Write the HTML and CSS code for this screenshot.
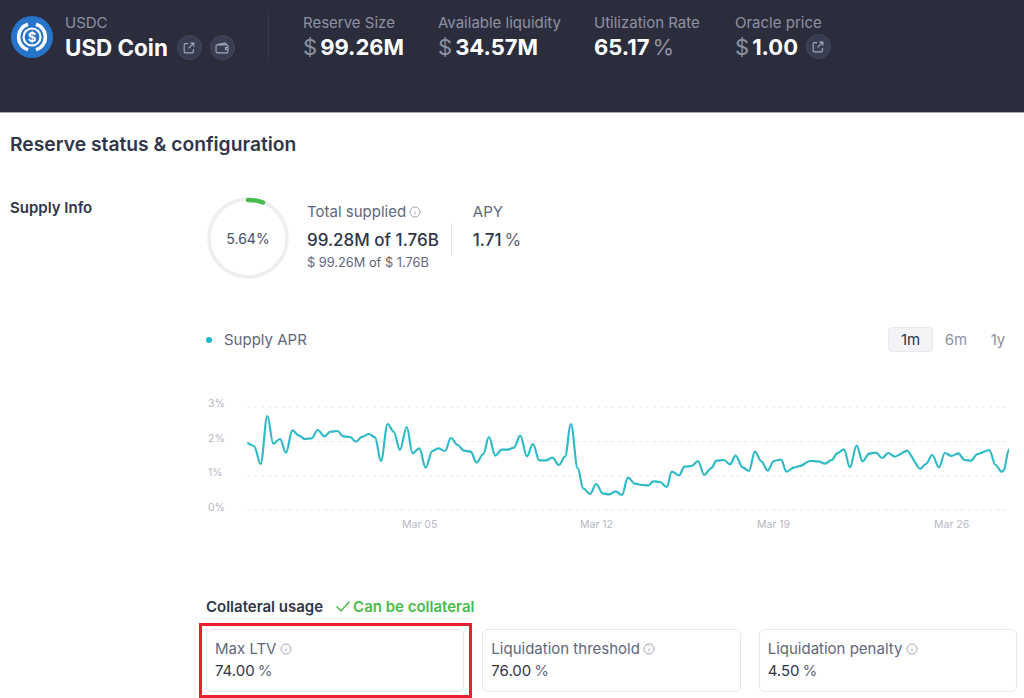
FILE: index.html
```html
<!DOCTYPE html>
<html lang="en">
<head>
    <title>USDC Reserve</title>
    <meta charset="utf-8">
    <meta name="viewport" content="width=device-width, initial-scale=1">
    <link rel="stylesheet" href="styles.css">
</head>
<body>
    <header class="topbar">
        <div class="asset">
            <svg class="logo" viewBox="0 0 42 42">
                <circle cx="21" cy="21" r="21" fill="#2775ca"/>
                <path d="M17 8.200a13.400 13.400 0 0 0 0 25.600M25 8.200a13.400 13.400 0 0 1 0 25.600" fill="none" stroke="#fff" stroke-width="3.600"/>
                <circle cx="21" cy="21" r="9.600" fill="#fff"/>
                <circle cx="21" cy="21" r="7.400" fill="#2775ca"/>
                <text x="21" y="25.600" text-anchor="middle" class="logo-sign">$</text>
            </svg>
            <div>
                <div class="stat-label">USDC</div>
                <div class="asset-name">
                    <span>USD Coin</span>
                    <a class="round-btn" href="#">
                        <svg viewBox="0 0 16 16"><path d="M7 3H4a1.500 1.500 0 0 0-1.500 1.500V12A1.500 1.500 0 0 0 4 13.500h7.500A1.500 1.500 0 0 0 13 12V9M9.500 2.500h4v4M13.500 2.500 7.500 8.500"/></svg>
                    </a>
                    <a class="round-btn" href="#">
                        <svg viewBox="0 0 16 16"><path d="M2.500 4 11.500 2.500c.8-.1 1.300.4 1.300 1.200v.8M2.700 4.500h10.600c.9 0 1.500.6 1.500 1.500v6c0 .9-.6 1.500-1.500 1.500H2.700c-.9 0-1.500-.6-1.500-1.500V6c0-.9.600-1.500 1.500-1.500ZM14.800 7.500h-2.800v2.500h2.800"/></svg>
                    </a>
                </div>
            </div>
        </div>
        <div class="stats">
            <div class="stat stat-size">
                <div class="stat-label">Reserve Size</div>
                <div class="stat-value"><i>$</i>99.26M</div>
            </div>
            <div class="stat stat-liquidity">
                <div class="stat-label">Available liquidity</div>
                <div class="stat-value"><i>$</i>34.57M</div>
            </div>
            <div class="stat stat-rate">
                <div class="stat-label">Utilization Rate</div>
                <div class="stat-value">65.17<i class="after">%</i></div>
            </div>
            <div class="stat">
                <div class="stat-label">Oracle price</div>
                <div class="stat-value">
                    <i>$</i>1.00
                    <a class="round-btn oracle-btn" href="#">
                        <svg viewBox="0 0 16 16"><path d="M7 3H4a1.500 1.500 0 0 0-1.500 1.500V12A1.500 1.500 0 0 0 4 13.500h7.500A1.500 1.500 0 0 0 13 12V9M9.500 2.500h4v4M13.500 2.500 7.500 8.500"/></svg>
                    </a>
                </div>
            </div>
        </div>
    </header>

    <main class="panel">
        <h1>Reserve status &amp; configuration</h1>

        <section class="supply">
            <h2>Supply Info</h2>
            <div class="supply-body">
                <div class="overview">
                    <div class="gauge">
                        <svg viewBox="0 0 82 82">
                            <circle cx="41" cy="41" r="39" fill="none" stroke="#eeeeee" stroke-width="3.500"/>
                            <path d="M41 3C47 3 52 3.800 56 5.500" fill="none" stroke="#46bc4b" stroke-width="4.500" stroke-linecap="round"/>
                        </svg>
                        <span>5.64%</span>
                    </div>
                    <div class="totals">
                        <div class="muted">Total supplied
                            <svg class="info" viewBox="0 0 12 12"><circle cx="6" cy="6" r="5"/><path d="M6 5.500v3M6 3.300v.6"/></svg>
                        </div>
                        <div class="strong">99.28M of 1.76B</div>
                        <div class="small">$ 99.26M of $ 1.76B</div>
                    </div>
                    <div class="apy">
                        <div class="muted">APY</div>
                        <div class="strong">1.71<i>%</i></div>
                    </div>
                </div>

                <div class="chart-head">
                    <div class="legend"><span class="dot"></span>Supply APR</div>
                    <div class="tabs">
                        <span class="tab active">1m</span>
                        <span class="tab">6m</span>
                        <span class="tab last">1y</span>
                    </div>
                </div>

                <svg class="chart" viewBox="16 0 818 152">
                    <g class="grid">
                        <line x1="57" x2="818" y1="22" y2="22"/>
                        <line x1="57" x2="818" y1="56.500" y2="56.500"/>
                        <line x1="57" x2="818" y1="91" y2="91"/>
                        <line x1="57" x2="818" y1="125" y2="125"/>
                    </g>
                    <g class="axis">
                        <text x="18" y="19">3%</text>
                        <text x="18" y="54">2%</text>
                        <text x="18" y="88">1%</text>
                        <text x="18" y="123">0%</text>
                        <text x="212" y="140">Mar 05</text>
                        <text x="390" y="140">Mar 12</text>
                        <text x="567" y="140">Mar 19</text>
                        <text x="744" y="140">Mar 26</text>
                    </g>
                    <path class="line" transform="scale(0.3333)" d="M172,175 C179,175 185,183 192,183 S205,237 212,237 S225,93 232,93 S243,176 250,176 S263,162 270,162 S281,203 288,203 S300,136 307,136 S320,152 327,152 S338,162 345,162 S358,160 365,160 S376,135 383,135 S396,154 403,154 S415,140 422,140 S435,138 442,138 S453,154 460,154 S473,156 480,156 S491,170 498,170 S510,155 517,155 S530,147 537,147 S548,157 555,157 S566,228 573,228 S586,117 593,117 S604,140 611,140 S623,195 630,195 S643,126 650,126 S661,205 668,205 S681,190 688,190 S700,248 707,248 S720,198 727,198 S738,190 745,190 S758,198 765,198 S776,159 783,159 S796,180 803,180 S815,197 822,197 S835,200 842,200 S853,233 860,233 S873,207 880,207 S890,156 897,156 S909,212 916,212 S928,194 935,194 S946,194 953,194 S965,188 972,188 S984,152 991,152 S1004,214 1011,214 S1022,177 1029,177 S1041,226 1048,226 S1061,226 1068,226 S1080,218 1087,218 S1100,240 1107,240 S1118,215 1125,215 S1136,117 1143,117 S1156,250 1163,250 S1173,310 1180,310 S1193,327 1200,327 S1212,297 1219,297 S1231,325 1238,325 S1251,328 1258,328 S1270,319 1277,319 S1289,330 1296,330 S1307,278 1314,278 S1328,296 1335,296 S1348,300 1355,300 S1368,301 1375,301 S1383,289 1390,289 S1403,291 1410,291 S1423,306 1430,306 S1439,260 1446,260 S1460,271 1467,271 S1477,245 1484,245 S1498,243 1505,243 S1517,228 1524,228 S1536,270 1543,270 S1556,250 1563,250 S1573,227 1580,227 S1595,225 1602,225 S1613,238 1620,238 S1630,212 1637,212 S1651,247 1658,247 S1670,258 1677,258 S1688,200 1695,200 S1708,230 1715,230 S1726,257 1733,257 S1745,228 1752,228 S1766,224 1773,224 S1783,260 1790,260 S1806,247 1813,247 S1823,243 1830,243 S1853,228 1860,228 S1878,229 1885,229 S1898,236 1905,236 S1918,225 1925,225 S1935,205 1942,205 S1955,193 1962,193 S1973,247 1980,247 S1993,182 2000,182 S2011,229 2018,229 S2031,206 2038,206 S2051,203 2058,203 S2070,219 2077,219 S2088,204 2095,204 S2108,215 2115,215 S2145,197 2152,197 S2183,252 2190,252 S2201,237 2208,237 S2220,210 2227,210 S2240,247 2247,247 S2258,204 2265,204 S2278,213 2285,213 S2298,205 2305,205 S2317,225 2324,225 S2336,227 2343,227 S2356,207 2363,207 S2391,195 2398,195 S2410,240 2417,240 S2428,260 2435,260 S2438,255 2442,255 S2452,193 2457,193"/>
                </svg>

                <div class="collateral">
                    <div class="collateral-head">
                        <b>Collateral usage</b>
                        <span class="ok">
                            <svg viewBox="0 0 16 16"><path d="M1.500 8.500 6 13 14.500 3.500"/></svg>
                            Can be collateral
                        </span>
                    </div>
                    <div class="cards">
                        <div class="card marked">
                            <div class="muted">Max LTV
                                <svg class="info" viewBox="0 0 12 12"><circle cx="6" cy="6" r="5"/><path d="M6 5.500v3M6 3.300v.6"/></svg>
                            </div>
                            <div class="card-value">74.00<i>%</i></div>
                        </div>
                        <div class="card">
                            <div class="muted">Liquidation threshold
                                <svg class="info" viewBox="0 0 12 12"><circle cx="6" cy="6" r="5"/><path d="M6 5.500v3M6 3.300v.6"/></svg>
                            </div>
                            <div class="card-value">76.00<i>%</i></div>
                        </div>
                        <div class="card">
                            <div class="muted">Liquidation penalty
                                <svg class="info" viewBox="0 0 12 12"><circle cx="6" cy="6" r="5"/><path d="M6 5.500v3M6 3.300v.6"/></svg>
                            </div>
                            <div class="card-value">4.50<i>%</i></div>
                        </div>
                    </div>
                </div>
            </div>
        </section>
    </main>
</body>
</html>
```

FILE: styles.css
```css
* {
    box-sizing: border-box;
    margin: 0;
    padding: 0;
    font-family: Inter, "Liberation Sans", sans-serif;
}

html, body {
    height: 698px;
    overflow: hidden;
}

body {
    background: #fff;
    color: #303549;
}

i {
    font-style: normal;
}

.topbar {
    display: flex;
    height: 113px;
    padding: 14px 0 0 11px;
    background: #2b2d3c;
    border-bottom: 1px solid #a9abb3;
}

.asset {
    display: flex;
    gap: 12px;
    width: 258px;
    height: 44px;
    border-right: 1px solid #383d51;
}

.logo {
    width: 42px;
    height: 42px;
    margin-top: 2px;
}

.logo-sign {
    font-size: 13px;
    font-weight: 700;
    fill: #fff;
}

.stat-label {
    font-size: 15px;
    line-height: 18px;
    color: #8e92a3;
}

.asset-name {
    display: flex;
    align-items: center;
    margin-top: 2px;
    font-size: 22.400px;
    font-weight: 700;
    color: #fff;
}

.round-btn {
    display: inline-flex;
    align-items: center;
    justify-content: center;
    width: 25px;
    height: 25px;
    margin-left: 8px;
    border-radius: 50%;
    background: #383d51;
    border: 1px solid #444859;
}

.asset-name .round-btn:first-of-type {
    margin-left: 9px;
}

.round-btn svg {
    width: 14px;
    height: 14px;
    fill: none;
    stroke: #a5a8b6;
    stroke-width: 1.300;
}

.stats {
    display: flex;
    padding-left: 34px;
}

.stat-size {
    width: 135px;
}

.stat-liquidity {
    width: 156px;
}

.stat-rate {
    width: 141px;
}

.stat-value {
    display: flex;
    align-items: center;
    height: 25px;
    margin-top: 2px;
    font-size: 22px;
    font-weight: 700;
    color: #fff;
}

.stat-value i {
    margin-right: 3px;
    font-weight: 400;
    color: #8e92a3;
}

.stat-value i.after {
    margin: 0 0 0 3px;
}

.oracle-btn {
    margin-left: 8px;
}

.panel {
    padding: 20px 0 0 10px;
}

h1 {
    font-size: 19.300px;
    line-height: 22px;
    font-weight: 600;
}

.supply {
    display: grid;
    grid-template-columns: 196px 1fr;
    margin-top: 44px;
}

h2 {
    font-size: 15px;
    line-height: 18px;
    font-weight: 600;
}

.overview {
    display: flex;
    margin-top: -2px;
}

.gauge {
    position: relative;
    width: 82px;
    height: 82px;
    margin-left: 1px;
}

.gauge svg {
    display: block;
    width: 82px;
    height: 82px;
}

.gauge span {
    position: absolute;
    inset: 0;
    display: flex;
    align-items: center;
    justify-content: center;
    font-size: 14px;
    color: #4a4f62;
}

.totals {
    margin: 6px 0 0 18px;
    padding-right: 12px;
}

.muted {
    font-size: 15px;
    line-height: 18px;
    color: #62677b;
}

.info {
    width: 12px;
    height: 12px;
    margin-left: -1px;
    vertical-align: -1px;
    fill: none;
    stroke: #a5a8b6;
    stroke-width: 1;
}

.strong {
    margin-top: 9px;
    font-size: 17px;
    line-height: 20px;
    font-weight: 500;
}

.strong i, .card-value i {
    margin-left: 3px;
    font-weight: 400;
    color: #62677b;
}

.small {
    margin-top: 5px;
    font-size: 12.800px;
    line-height: 16px;
    color: #62677b;
}

.apy {
    height: 33px;
    margin-top: 26px;
    padding-left: 21px;
    border-left: 1px solid #e4e5e9;
}

.apy .muted {
    margin-top: -20px;
}

.chart-head {
    display: flex;
    justify-content: space-between;
    align-items: center;
    height: 25px;
    margin-top: 48px;
    padding-right: 7px;
}

.legend {
    display: flex;
    align-items: center;
    font-size: 15px;
    color: #62677b;
}

.dot {
    width: 6px;
    height: 6px;
    margin: 0 12px 0 0;
    border-radius: 50%;
    background: #1cb8c8;
}

.tabs {
    display: flex;
    align-items: center;
}

.tab {
    width: 46px;
    height: 25px;
    line-height: 25px;
    text-align: center;
    font-size: 15px;
    color: #8e92a3;
}

.tab.last {
    width: 38px;
}

.tab.active {
    width: 45px;
    background: #f4f4f6;
    border: 1px solid #e9e9ed;
    border-radius: 4px;
    line-height: 23px;
    color: #303549;
}

.chart {
    display: block;
    width: 818px;
    height: 152px;
    margin-top: 33px;
}

.grid line {
    stroke: #e6e7ea;
    stroke-width: 1;
    stroke-dasharray: 3 4;
}

.axis text {
    font-size: 10.500px;
    fill: #b5b8c3;
    dominant-baseline: middle;
}

.line {
    fill: none;
    stroke: #2ebac6;
    stroke-width: 6.500;
    stroke-linejoin: round;
}

.collateral {
    margin-top: 60px;
    padding-right: 7px;
}

.collateral-head {
    display: flex;
    align-items: center;
    height: 18px;
    font-size: 15px;
}

.collateral-head b {
    font-weight: 600;
}

.ok {
    display: flex;
    align-items: center;
    margin-left: 12px;
    font-weight: 600;
    color: #46bc4b;
}

.ok svg {
    width: 16px;
    height: 16px;
    margin-right: 2px;
    fill: none;
    stroke: #46bc4b;
    stroke-width: 1.500;
}

.cards {
    display: grid;
    grid-template-columns: repeat(3, 1fr);
    gap: 18px;
    margin-top: 14px;
}

.card {
    position: relative;
    height: 63px;
    padding: 10px 8px;
    border: 1px solid #e6e7ea;
    border-radius: 6px;
}

.card-value {
    margin-top: 4px;
    font-size: 15px;
    line-height: 18px;
}

/* red annotation drawn around the first card */
.marked::after {
    content: "";
    position: absolute;
    inset: -7px -9px -7px -8px;
    border: 3px solid #e8202f;
}
```
